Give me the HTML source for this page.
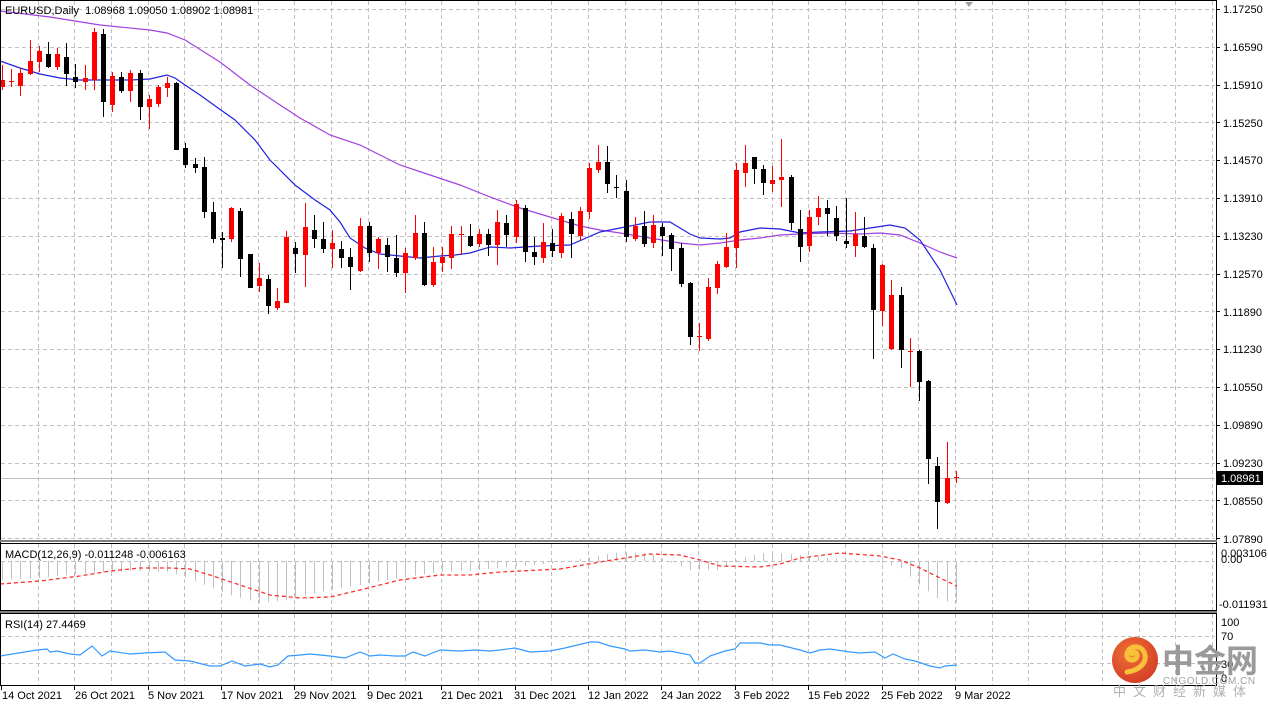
<!DOCTYPE html>
<html><head><meta charset="utf-8">
<style>
html,body{margin:0;padding:0;background:#fff;width:1268px;height:709px;overflow:hidden}
svg{display:block}
text{font-family:"Liberation Sans","DejaVu Sans",sans-serif;font-size:11px;fill:#000}
</style></head>
<body>
<svg id="s" width="1268" height="709" viewBox="0 0 1268 709" xmlns="http://www.w3.org/2000/svg">
<rect width="1268" height="709" fill="#fff"/>
<g id="grid" stroke="#c0c0c0" stroke-width="1" stroke-dasharray="4,3" fill="none"></g>
<line x1="0" y1="478.5" x2="1215" y2="478.5" stroke="#c0c0c0"/>
<g id="ind"></g>
<g id="ma" fill="none" stroke-width="1.2"></g>
<g id="candles"></g>
<g stroke="#000" fill="none" stroke-width="1">
<line x1="0.5" y1="0" x2="0.5" y2="686"/>
<line x1="1216.5" y1="0" x2="1216.5" y2="686"/>
<line x1="0" y1="0.5" x2="1216" y2="0.5"/>
</g>
<rect x="0" y="540" width="1217" height="2" fill="#808080"/>
<rect x="0" y="543" width="1217" height="1" fill="#000"/>
<rect x="0" y="610" width="1217" height="1" fill="#000"/>
<rect x="0" y="611" width="1217" height="2" fill="#808080"/>
<rect x="0" y="613" width="1217" height="1" fill="#000"/>
<rect x="0" y="685" width="1217" height="1" fill="#000"/>
<polygon points="965,2 973,2 969,7" fill="#a0a0a0"/>
<g id="ticks" stroke="#000"></g>
<text x="5" y="14">EURUSD,Daily&#160;&#160;1.08968 1.09050 1.08902 1.08981</text>
<text x="5" y="558">MACD(12,26,9) -0.011248 -0.006163</text>
<text x="5" y="628">RSI(14) 27.4469</text>
<g id="plabels">
<text x="1223" y="13">1.17250</text>
<text x="1223" y="51">1.16590</text>
<text x="1223" y="89">1.15910</text>
<text x="1223" y="127">1.15250</text>
<text x="1223" y="164">1.14570</text>
<text x="1223" y="202">1.13910</text>
<text x="1223" y="240">1.13230</text>
<text x="1223" y="278">1.12570</text>
<text x="1223" y="316">1.11890</text>
<text x="1223" y="353">1.11230</text>
<text x="1223" y="391">1.10550</text>
<text x="1223" y="429">1.09890</text>
<text x="1223" y="467">1.09230</text>
<text x="1223" y="505">1.08550</text>
<text x="1223" y="543">1.07890</text>
<text x="1221" y="557">0.003106</text>
<text x="1221" y="563">0.00</text>
<text x="1219" y="608">-0.011931</text>
<text x="1221" y="626">100</text>
<text x="1221" y="640">70</text>
<text x="1221" y="668">30</text>
<text x="1221" y="682">0</text>
</g>
<rect x="1217" y="471" width="46" height="14" fill="#000"/>
<text x="1221" y="482" style="fill:#fff">1.08981</text>
<g id="dates">
<text x="2" y="699">14 Oct 2021</text>
<text x="75" y="699">26 Oct 2021</text>
<text x="148" y="699">5 Nov 2021</text>
<text x="221" y="699">17 Nov 2021</text>
<text x="294" y="699">29 Nov 2021</text>
<text x="367" y="699">9 Dec 2021</text>
<text x="441" y="699">21 Dec 2021</text>
<text x="514" y="699">31 Dec 2021</text>
<text x="588" y="699">12 Jan 2022</text>
<text x="661" y="699">24 Jan 2022</text>
<text x="734" y="699">3 Feb 2022</text>
<text x="808" y="699">15 Feb 2022</text>
<text x="881" y="699">25 Feb 2022</text>
<text x="955" y="699">9 Mar 2022</text>
</g>
<defs>
<radialGradient id="lg" cx="0.4" cy="0.35" r="0.7">
<stop offset="0" stop-color="#f06a2a"/><stop offset="1" stop-color="#d0321c"/>
</radialGradient>
</defs>
<circle cx="1135" cy="660" r="23" fill="url(#lg)" opacity="0.95"/>
<path d="M1127 672 C1142 670 1148 660 1144 652 C1140 644 1128 646 1127 654 C1126 661 1136 662 1137 656 C1138 652 1133 651 1132 654" stroke="#f7c23a" stroke-width="5" fill="none" stroke-linecap="round"/>
<text x="1162" y="672" style="font-size:32px;font-weight:bold;fill:#9a9a9a;font-family:'Liberation Sans','Noto Sans CJK SC',sans-serif">中金网</text>
<text x="1163" y="684" style="font-size:10px;fill:#a0a0a0;letter-spacing:0.5px">CNGOLD.COM.CN</text>
<text x="1113" y="696" style="font-size:13px;fill:#b0b0b0;letter-spacing:7px;font-family:'Liberation Sans','Noto Sans CJK SC',sans-serif">中文财经新媒体</text>
</svg>
<script>
var NS="http://www.w3.org/2000/svg";
function el(p,t,a){var e=document.createElementNS(NS,t);for(var k in a)e.setAttribute(k,a[k]);p.appendChild(e);return e;}
var g=document.getElementById('grid');
for(var k=1;k<34;k++){var x=Math.round(0.8+36.7*k)+0.5;if(x>1214)break;
 el(g,'line',{x1:x,y1:1,x2:x,y2:540});el(g,'line',{x1:x,y1:544,x2:x,y2:610});el(g,'line',{x1:x,y1:614,x2:x,y2:685});}
for(var k=0;k<15;k++){var y=Math.round(9+37.8*k)+0.5;el(g,'line',{x1:1,y1:y,x2:1215,y2:y});}
[561.5,636.5,663.5].forEach(function(y){el(g,'line',{x1:1,y1:y,x2:1215,y2:y});});
var tk=document.getElementById('ticks');
for(var k=0;k<15;k++){var y=Math.round(9+37.8*k)+0.5;el(tk,'line',{x1:1216,y1:y,x2:1220,y2:y});}
for(var k=0;k<14;k++){var x=Math.round(0.8+73.4*k)+0.5;el(tk,'line',{x1:x,y1:685,x2:x,y2:690});}
var C=[[87,80,65,90],[82,81,69,87],[86,73,68,96],[74,61,40,75],[62,51,46,72],[54,67,42,68],[67,54,48,70],[57,74,43,86],[77,82,64,88],[82,78,65,90],
[80,32,28,90],[34,102,29,117],[105,76,72,112],[77,91,72,93],[91,73,70,102],[73,107,70,120],[107,99,95,129],[104,87,85,107],[88,83,77,97],[83,150,82,150],
[148,165,143,168],[164,168,158,173],[167,212,157,218],[212,239,202,243],[238,240,232,268],[239,208,207,242],[211,259,208,277],[254,288,254,288],[286,278,263,292],[279,306,275,314],
[308,301,288,310],[303,237,231,303],[248,254,242,273],[255,227,203,287],[230,239,215,248],[239,249,222,253],[249,243,230,268],[249,258,241,268],[257,267,248,290],[271,226,218,272],
[226,253,222,262],[253,239,237,269],[245,257,238,272],[258,273,235,277],[273,253,248,293],[258,233,215,260],[233,285,222,286],[285,262,247,287],[263,257,247,272],[258,234,226,269],
[235,234,226,255],[236,246,224,247],[244,234,229,247],[234,245,229,256],[245,222,210,265],[223,235,215,247],[237,204,200,243],[208,252,205,262],[252,257,237,265],[258,242,223,263],
[243,251,229,257],[253,216,213,258],[219,234,212,258],[236,211,207,240],[212,168,163,219],[170,162,145,173],[162,184,146,193],[187,188,175,198],[191,237,180,242],[239,226,217,241],
[226,244,211,247],[243,225,215,248],[227,236,223,256],[235,249,233,271],[248,284,243,287],[283,337,282,345],[337,336,323,351],[339,287,278,341],[288,264,261,294],[267,247,233,268],
[248,170,163,268],[173,163,145,187],[157,169,157,184],[169,183,165,195],[184,180,166,192],[180,177,139,207],[177,223,175,230],[229,247,210,262],[246,217,210,252],[217,208,196,225],
[208,214,200,236],[218,236,206,241],[241,244,198,248],[246,234,212,257],[236,247,217,248],[248,310,244,359],[311,265,264,326],[349,295,280,350],[295,350,287,368],[352,351,338,387],
[351,382,350,401],[381,459,380,484],[466,502,457,529],[503,478,442,504],[478,477,471,483]];
var cg=document.getElementById('candles');
C.forEach(function(c,n){var x=Math.round(2+9.17*n);var bull=c[1]<c[0];var col=bull?'#ff0000':'#000';
 el(cg,'line',{x1:x+0.5,y1:c[2],x2:x+0.5,y2:c[3],stroke:col});
 var t=Math.min(c[0],c[1]),b=Math.max(c[0],c[1]);
 if(b-t<1){el(cg,'line',{x1:x-2,y1:t+0.5,x2:x+3,y2:t+0.5,stroke:col});}
 else el(cg,'rect',{x:x-2,y:t,width:5,height:b-t,fill:col});
});
function pl(pts,stroke,extra){var d='M'+pts.map(function(p){return p[0]+' '+p[1]}).join(' L');var a={d:d,stroke:stroke,fill:'none'};for(var k in extra)a[k]=extra[k];return a;}
var ma=document.getElementById('ma');
var blue=[[0,61],[20,68],[40,74],[60,78],[80,80],[100,80],[130,80],[150,79],[167,75],[175,78],[185,85],[200,95],[218,108],[235,120],[255,140],[270,160],[295,185],[315,200],[330,210],[340,222],[350,238],[365,248],[380,254],[400,256],[420,258],[440,256],[455,255],[470,253],[490,247],[510,248],[540,246],[570,245],[600,232],[620,228],[650,222],[670,222],[690,234],[700,238],[720,239],[730,238],[740,232],[760,228],[780,229],[800,233],[820,232],[850,231],[870,228],[890,225],[905,228],[920,240],[940,270],[957,305]];
var purp=[[0,11],[50,17],[100,25],[150,30],[167,33],[185,40],[220,62],[250,85],[280,105],[300,118],[330,135],[360,145],[400,165],[430,175],[460,185],[490,197],[520,208],[560,220],[580,226],[600,230],[620,233],[650,238],[680,243],[700,245],[720,243],[740,240],[760,238],[780,235],[800,234],[830,233],[860,234],[880,233],[900,235],[920,243],[940,252],[957,258]];
el(ma,'path',pl(purp,'#a040e0'));
el(ma,'path',pl(blue,'#2020e0'));
function interp(pts,x){if(x<=pts[0][0])return pts[0][1];for(var i=1;i<pts.length;i++){if(x<=pts[i][0]){var a=pts[i-1],b=pts[i];return a[1]+(b[1]-a[1])*(x-a[0])/(b[0]-a[0]);}}return pts[pts.length-1][1];}
var ind=document.getElementById('ind');
var macd=[[0,580],[40,578],[80,574],[130,571],[170,572],[200,583],[230,595],[260,603],[290,600],[320,592],[360,585],[400,578],[440,572],[480,570],[520,566],[560,563],[590,557],[620,552],[650,553],[670,562],[690,570],[720,570],[740,558],[770,552],[800,555],[840,559],[880,563],[900,567],[920,585],[940,600],[957,603]];
for(var n=0;n<105;n++){var x=Math.round(2+9.17*n)+0.5;var v=interp(macd,x);el(ind,'line',{x1:x,y1:561,x2:x,y2:v,stroke:'#c0c0c0'});}
var sig=[[0,584],[40,581],[80,576],[110,571],[140,568],[170,568],[190,569],[210,575],[240,585],[270,595],[300,598],[330,597],[360,590],[400,580],[440,575],[470,575],[500,572],[560,569],[600,562],[650,554],[680,555],[700,560],[720,566],[760,567],[780,564],[800,558],[840,553],[880,556],[900,560],[920,568],[940,578],[957,586]];
el(ind,'path',pl(sig,'#ff3030',{'stroke-dasharray':'4,3','stroke-width':'1.3'}));
var rsi=[[0,656],[37,650],[47,649],[50,652],[57,651],[70,654],[80,655],[92,646],[102,656],[110,651],[130,654],[145,653],[165,652],[175,660],[190,661],[210,666],[220,666],[232,661],[245,666],[260,664],[270,667],[278,665],[288,656],[300,655],[310,654],[330,656],[345,658],[360,652],[370,656],[380,655],[395,656],[405,656],[413,652],[425,656],[440,650],[460,651],[475,650],[490,651],[500,650],[515,648],[530,652],[550,651],[565,648],[590,642],[598,642],[610,646],[625,649],[630,651],[645,650],[660,652],[670,651],[690,655],[695,663],[700,663],[710,656],[725,651],[735,649],[740,643],[760,643],[770,645],[780,645],[800,650],[810,653],[820,650],[830,649],[850,652],[860,653],[875,652],[880,655],[885,658],[893,654],[905,659],[915,661],[930,666],[940,668],[945,666],[957,665]];
el(ind,'path',pl(rsi,'#3399ff',{'stroke-width':'1.2'}));
</script>
</body></html>
